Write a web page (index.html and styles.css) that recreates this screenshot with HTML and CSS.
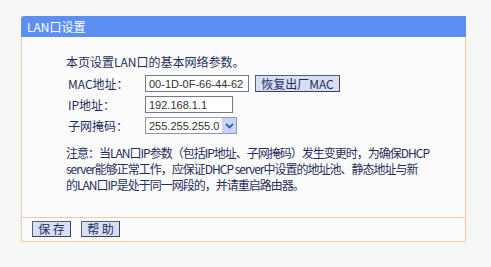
FILE: index.html
```html
<!DOCTYPE html>
<html lang="zh-CN">
<head>
<meta charset="UTF-8" />
<title>LAN口设置</title>
<link rel="stylesheet" href="styles.css">
</head>
<body>
  <div class="panel">
    <div class="panel-title">LAN口设置</div>

    <div class="panel-body">
      <p class="intro">本页设置LAN口的基本网络参数。</p>

      <!-- form rows -->
      <div class="form-row">
        <label class="label">MAC地址：</label>
        <input class="field field-mac" type="text" value="00-1D-0F-66-44-62" readonly />
        <button class="btn btn-restore" type="button">恢复出厂MAC</button>
      </div>
      <div class="form-row">
        <label class="label">IP地址：</label>
        <input class="field field-ip" type="text" value="192.168.1.1" />
      </div>
      <div class="form-row">
        <label class="label">子网掩码：</label>
        <div class="select-box">
          <span class="select-value">255.255.255.0</span>
          <span class="select-arrow">
            <svg width="9" height="6" viewBox="0 0 9 6">
              <path d="M1 1 L4.5 4.5 L8 1" fill="none" stroke="#3f5f9e" stroke-width="1.8" />
            </svg>
          </span>
        </div>
      </div>

      <p class="note">
        注意：当LAN口IP参数（包括IP地址、子网掩码）发生变更时，为确保DHCP<br>
        server能够正常工作，应保证DHCP server中设置的地址池、静态地址与新<br>
        的LAN口IP是处于同一网段的，并请重启路由器。
      </p>
    </div>

    <div class="panel-footer">
      <button class="btn btn-small" type="button">保 存</button>
      <button class="btn btn-small" type="button">帮 助</button>
    </div>
  </div>
</body>
</html>
```

FILE: styles.css
```css
body {
  margin: 0;
  padding: 16px 0 0 21px;
  background: #f6f6f6;
  font-family: "Noto Sans CJK SC", "Liberation Sans", sans-serif;
  font-size: 12px;
  color: #1f2f5c;
}

.panel {
  width: 445px;
  box-sizing: border-box;
  background: #fbfbfb;
}

.panel-title {
  height: 21px;
  line-height: 21px;
  padding-left: 6px;
  background: #5c8ff1;
  color: #fff;
  border-top-left-radius: 3px;
  font-size: 12px;
}

.panel-body {
  border-left: 1px solid #f0cc9a;
  border-right: 1px solid #f0cc9a;
  border-bottom: 1px solid #f0cc9a;
  padding: 17px 0 24px 44px;
}

.intro {
  margin: 0 0 3px 0;
  line-height: 16px;
}

/* label + input rows */
.form-row {
  display: flex;
  align-items: center;
  height: 21px;
  padding-left: 2px;
}

.label {
  width: 77px;
  flex-shrink: 0;
}

.field {
  box-sizing: border-box;
  height: 17px;
  margin: 0;
  padding: 0 3px;
  border: 1px solid #6f7b8c;
  background: #fff;
  font-family: "Liberation Sans", sans-serif;
  font-size: 11px;
  color: #333;
  outline: none;
}

.field-mac {
  width: 104px;
}

.field-ip {
  width: 88px;
}

.select-box {
  display: flex;
  align-items: center;
  box-sizing: border-box;
  width: 92px;
  height: 17px;
  border: 1px solid #8d9bb0;
  background: #fff;
}

.select-value {
  flex: 1;
  padding-left: 3px;
  font-family: "Liberation Sans", sans-serif;
  font-size: 11px;
  color: #333;
}

.select-arrow {
  display: flex;
  align-items: center;
  justify-content: center;
  width: 14px;
  height: 15px;
  background: #c6d6fa;
}

.btn {
  box-sizing: border-box;
  margin: 0;
  padding: 0;
  background: #d8def3;
  border: 1px solid #5a5f6e;
  border-right-color: #3d4150;
  border-bottom-color: #3d4150;
  font-family: "Noto Sans CJK SC", "Liberation Sans", sans-serif;
  font-size: 12px;
  color: #1f2f5c;
  line-height: 14px;
}

.btn-restore {
  width: 85px;
  height: 17px;
  margin-left: 6px;
}

.note {
  margin: 9px 0 0 0;
  line-height: 16px;
  white-space: nowrap;
  letter-spacing: -1px;
}

.panel-footer {
  display: flex;
  gap: 10px;
  padding: 3px 0 4px 10px;
  border-left: 1px solid #f0cc9a;
  border-right: 1px solid #f0cc9a;
  border-bottom: 1px solid #f0cc9a;
}

.btn-small {
  width: 39px;
  height: 16px;
}
```
